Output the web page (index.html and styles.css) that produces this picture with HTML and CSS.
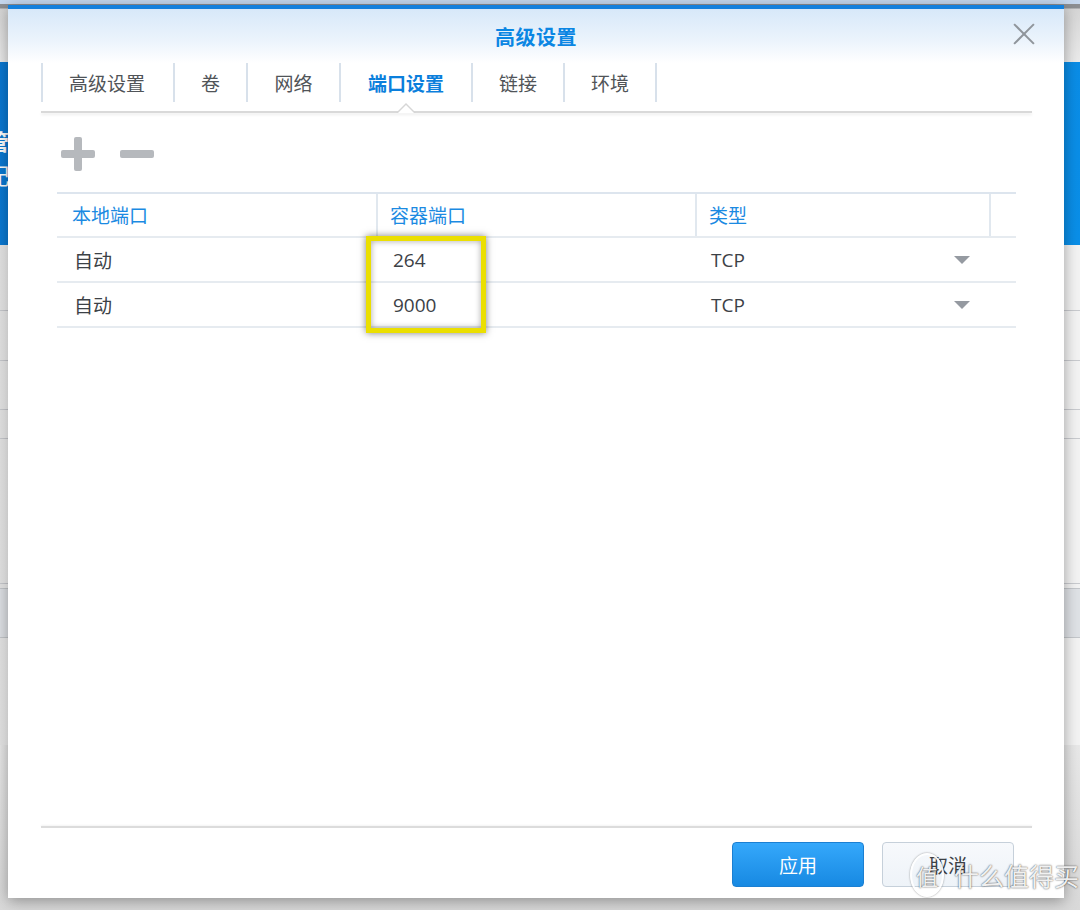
FILE: index.html
```html
<!DOCTYPE html>
<html lang="zh-CN">
<head>
<meta charset="utf-8">
<title>高级设置</title>
<link rel="stylesheet" href="styles.css">
</head>
<body>
<div class="desktop">
  <div class="bg-top"></div>
  <div class="bg-band"><span class="bg-char c1">管</span><span class="bg-char c2">配</span></div>
  <div class="bg-rest">
    <div class="bg-line l1"></div>
    <div class="bg-line l2"></div>
    <div class="bg-line l3"></div>
    <div class="bg-line l4"></div>
    <div class="bg-block"></div>
    <div class="bg-line l5"></div>
    <div class="bg-lower"></div>
  </div>
</div>

<div class="dialog">
  <div class="header">
    <span class="title">高级设置</span>
    <span class="close"></span>
  </div>
  <div class="content">
    <div class="tabs">
      <div class="tab w1">高级设置</div>
      <div class="tab w2">卷</div>
      <div class="tab w3">网络</div>
      <div class="tab w4 active">端口设置</div>
      <div class="tab w5">链接</div>
      <div class="tab w6 last">环境</div>
    </div>
    <div class="tabline"></div>

    <div class="toolbar">
      <span class="btn-plus"></span>
      <span class="btn-minus"></span>
    </div>

    <div class="table">
      <div class="row head">
        <div class="cell">本地端口</div>
        <div class="cell sep">容器端口</div>
        <div class="cell sep">类型</div>
        <div class="cell sep"></div>
      </div>
      <div class="row">
        <div class="cell">自动</div>
        <div class="cell">264</div>
        <div class="cell select">TCP<span class="arrow"></span></div>
        <div class="cell"></div>
      </div>
      <div class="row">
        <div class="cell">自动</div>
        <div class="cell">9000</div>
        <div class="cell select">TCP<span class="arrow"></span></div>
        <div class="cell"></div>
      </div>
      <div class="highlight"></div>
    </div>

    <div class="spacer"></div>
    <div class="footline"></div>
    <div class="buttons">
      <button class="btn primary">应用</button>
      <button class="btn">取消</button>
    </div>
  </div>
</div>

<div class="watermark"><span class="wm-circle">值</span><span class="wm-text">什么值得买</span></div>
</body>
</html>
```

FILE: styles.css
```css
html, body {
  margin: 0;
  padding: 0;
}
body {
  width: 1080px;
  height: 910px;
  overflow: hidden;
  position: relative;
  font-family: "Open Sans", "Noto Sans CJK SC", sans-serif;
  background: #efefef;
}

/* background page */
.desktop {
  display: flex;
  flex-direction: column;
  height: 910px;
}
.bg-top {
  height: 62px;
  background: linear-gradient(to bottom, #c6d8ee 0, #c6d8ee 4px, #8d8f92 4px, #8d8f92 8px, #d6d6d6 9px, #ebebeb 62px);
}
.bg-band {
  height: 183px;
  background: linear-gradient(120deg, #0a78d2 0%, #0b86e0 60%, #0a8fe8 100%);
  position: relative;
}
.bg-char {
  position: absolute;
  left: -13px;
  color: #fff;
  font-size: 22px;
  font-family: "Noto Sans CJK SC", sans-serif;
}
.c1 { top: 62px; font-weight: bold; }
.c2 { top: 96px; }
.bg-rest {
  flex: 1;
  background: linear-gradient(to right, #e4e4e4, #f3f3f3 8px);
  position: relative;
}
.bg-line {
  position: absolute;
  left: 0;
  width: 1080px;
  height: 1px;
  background: #c9cbcf;
}
.l1 { top: 65px; }
.l2 { top: 115px; }
.l3 { top: 164px; }
.l4 { top: 193px; }
.l5 { top: 338px; }
.bg-block {
  position: absolute;
  left: 0;
  top: 343px;
  width: 1080px;
  height: 48px;
  background: #dfe2e6;
  border-top: 1px solid #c4c7cb;
  border-bottom: 1px solid #c4c7cb;
}
.bg-lower {
  position: absolute;
  left: 0;
  top: 500px;
  width: 1080px;
  height: 165px;
  background: linear-gradient(to bottom, #e8e8e8, #d9d9d9);
  border-left: 0;
}

/* dialog window */
.dialog {
  position: absolute;
  left: 8px;
  top: 5px;
  width: 1056px;
  height: 893px;
  box-sizing: border-box;
  background: #fff;
  border-top: 4px solid #1480dc;
  box-shadow: 0 3px 14px rgba(0, 0, 0, 0.35);
  display: flex;
  flex-direction: column;
}
.header {
  height: 54px;
  flex: none;
  background: linear-gradient(to bottom, #d7e8f9 0%, #ecf4fc 60%, #ffffff 100%);
  display: flex;
  align-items: center;
  justify-content: center;
  position: relative;
}
.title {
  font-family: "Noto Sans CJK SC", sans-serif;
  font-size: 20px;
  font-weight: bold;
  color: #0b86e3;
  letter-spacing: 0.5px;
}
.close {
  position: absolute;
  right: 29px;
  top: 14px;
  width: 22px;
  height: 22px;
}
.close::before, .close::after {
  content: "";
  position: absolute;
  left: -3px;
  top: 10px;
  width: 28px;
  height: 2px;
  background: #8f959b;
  transform: rotate(45deg);
}
.close::after {
  transform: rotate(-45deg);
}

.content {
  flex: 1;
  display: flex;
  flex-direction: column;
  padding: 0 32px 0 33px;
}

/* tabs */
.tabs {
  display: flex;
  height: 39px;
}
.tab {
  box-sizing: border-box;
  border-left: 2px solid #d8e1eb;
  display: flex;
  align-items: center;
  justify-content: center;
  font-family: "Noto Sans CJK SC", sans-serif;
  font-size: 19px;
  color: #505458;
  position: relative;
}
.tab.last { border-right: 2px solid #d8e1eb; }
.w1 { width: 132px; padding-right: 2px; }
.w2 { width: 73px; }
.w3 { width: 93px; }
.w4 { width: 132px; }
.w5 { width: 92px; }
.w6 { width: 94px; }
.tab.active {
  color: #0b7fdc;
  font-weight: bold;
}
.tab.active::before {
  content: "";
  position: absolute;
  left: 50%;
  bottom: -11px;
  margin-left: -10px;
  border-left: 10px solid transparent;
  border-right: 10px solid transparent;
  border-bottom: 10px solid #d6d6d6;
  z-index: 2;
}
.tab.active::after {
  content: "";
  position: absolute;
  left: 50%;
  bottom: -11px;
  margin-left: -8px;
  border-left: 8px solid transparent;
  border-right: 8px solid transparent;
  border-bottom: 8px solid #fff;
  z-index: 3;
}
.tabline {
  margin-top: 9px;
  height: 2px;
  background: #d9d9d9;
  box-shadow: 0 2px 3px rgba(0, 0, 0, 0.08);
}

/* toolbar */
.toolbar {
  display: flex;
  gap: 25px;
  margin: 24px 0 0 20px;
  height: 34px;
}
.btn-plus, .btn-minus {
  width: 34px;
  height: 34px;
  position: relative;
}
.btn-plus::before, .btn-plus::after, .btn-minus::before {
  content: "";
  position: absolute;
  background: #b6b9bd;
  border-radius: 2px;
}
.btn-plus::before, .btn-minus::before {
  left: 0;
  top: 13px;
  width: 34px;
  height: 8px;
}
.btn-plus::after {
  left: 13px;
  top: 0;
  width: 8px;
  height: 34px;
}

/* table */
.table {
  margin: 21px 0 0 16px;
  width: 959px;
  border-top: 2px solid #dde5ee;
  position: relative;
}
.row {
  display: grid;
  grid-template-columns: 319px 319px 294px 27px;
  height: 45px;
  box-sizing: border-box;
  border-bottom: 2px solid #e6ebf0;
}
.row.head {
  height: 44px;
}
.cell {
  box-sizing: border-box;
  display: flex;
  align-items: center;
  padding-left: 17px;
  font-family: "Open Sans", "Noto Sans CJK SC", sans-serif;
  font-size: 19px;
  color: #3c4146;
}
.row.head .cell {
  color: #1b8ae2;
  padding-left: 15px;
}
.row.head .cell.sep {
  border-left: 2px solid #e1e8ef;
  padding-left: 12px;
}
.cell.select {
  justify-content: space-between;
  padding-left: 16px;
  padding-right: 19px;
}
.arrow {
  width: 0;
  height: 0;
  border-left: 8.5px solid transparent;
  border-right: 8.5px solid transparent;
  border-top: 8px solid #959aa1;
}
.highlight {
  position: absolute;
  left: 309px;
  top: 42px;
  width: 120px;
  height: 97px;
  box-sizing: border-box;
  border: 5px solid #ebdf00;
  box-shadow: 0 0 7px rgba(0, 0, 0, 0.5), inset 0 0 6px rgba(0, 0, 0, 0.35);
}

.spacer { flex: 1; }
.footline {
  height: 2px;
  background: #dcdcdc;
  box-shadow: 0 -1px 2px rgba(0, 0, 0, 0.05);
}
.buttons {
  display: flex;
  justify-content: flex-end;
  gap: 18px;
  padding: 14px 18px 11px 0;
}
.btn {
  width: 132px;
  height: 45px;
  box-sizing: border-box;
  border-radius: 4px;
  border: 1px solid #c6d0da;
  background: linear-gradient(to bottom, #f7f9fc, #eef3f8);
  font-family: "Noto Sans CJK SC", sans-serif;
  font-size: 19px;
  color: #3c4146;
  padding: 0;
}
.btn.primary {
  border: 1px solid #1b7fd2;
  background: linear-gradient(to bottom, #35a8fb, #1789e2);
  color: #fff;
}

/* watermark */
.watermark {
  position: absolute;
  left: 910px;
  top: 853px;
  display: flex;
  align-items: center;
  gap: 10px;
  font-family: "Noto Sans CJK SC", sans-serif;
  color: rgba(255, 255, 255, 0.92);
  text-shadow: 0 0 2px rgba(0, 0, 0, 0.55), 0 0 1px rgba(0, 0, 0, 0.4);
}
.wm-circle {
  width: 30px;
  height: 40px;
  border-radius: 50%;
  border: 2px solid rgba(255, 255, 255, 0.9);
  box-shadow: 0 0 2px rgba(0, 0, 0, 0.45);
  display: flex;
  align-items: center;
  justify-content: center;
  font-size: 22px;
}
.wm-text {
  font-size: 25px;
}
```
